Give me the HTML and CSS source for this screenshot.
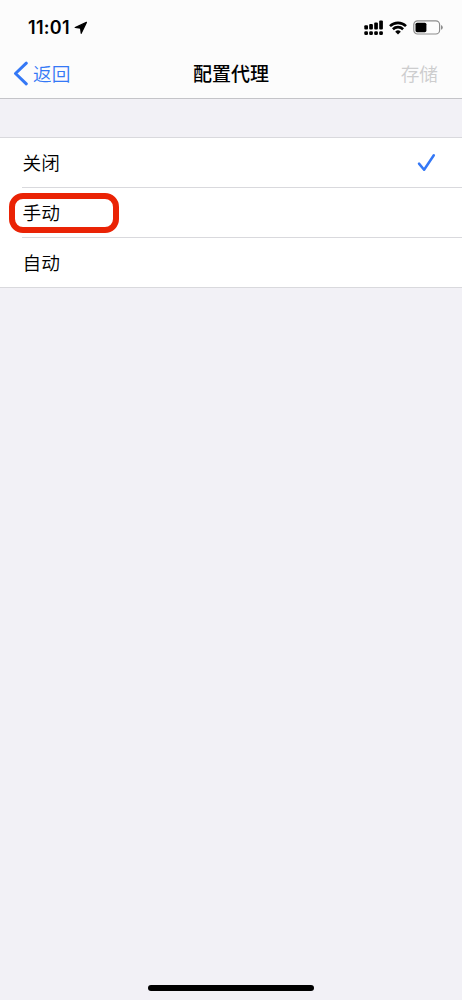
FILE: index.html
```html
<!DOCTYPE html>
<html lang="zh-CN">
<head>
<meta charset="utf-8">
<title>配置代理</title>
<link rel="stylesheet" href="styles.css">
</head>
<body>
<div class="screen">
  <header class="header">
    <div class="status">
      <span class="time">11:01</span>
      <svg class="location" width="14" height="14" viewBox="0 0 14 14"><path d="M12.4 1.4 1.2 6.5 6.6 7.2 7.2 12.3Z" stroke="#000" stroke-width="1.2" stroke-linejoin="round"/></svg>
      <svg class="signal" width="20" height="16" viewBox="0 0 20 16">
        <rect x="0.3" y="5.2" width="3.7" height="4.3" rx="1"/><rect x="5.2" y="4" width="3.7" height="5.5" rx="1"/><rect x="10.2" y="2.4" width="3.7" height="7.1" rx="1"/><rect x="15.2" y="0.6" width="3.7" height="8.9" rx="1"/>
        <rect x="0.3" y="11.3" width="3.7" height="3.8" rx="1.3"/><rect x="5.2" y="11.3" width="3.7" height="3.8" rx="1.3"/><rect x="10.2" y="11.3" width="3.7" height="3.8" rx="1.3"/><rect x="15.2" y="11.3" width="3.7" height="3.8" rx="1.3"/>
      </svg>
      <svg class="wifi" width="18" height="14" viewBox="0 0 18 14"><path d="M1 5.1A11.6 11.6 0 0 1 17 5.1M3.9 8.2A7.4 7.4 0 0 1 14.1 8.2" fill="none" stroke="#000" stroke-width="2.6"/><path d="M6.2 10.7A4 4 0 0 1 11.8 10.7L9 13.5Z"/></svg>
      <svg class="battery" width="30" height="15" viewBox="0 0 30 15"><rect x="0.8" y="0.8" width="25.8" height="13.2" rx="3.8" fill="none" stroke="#8c8c8c" stroke-width="1.2"/><rect x="2.5" y="2.7" width="10.9" height="9.5" rx="1.6"/><path d="M28 5Q29.8 5.6 29.8 7.4T28 9.8Z" fill="#8c8c8c"/></svg>
    </div>
    <nav class="nav">
      <div class="back"><svg width="15" height="25" viewBox="0 0 15 25"><path d="M13.3 2.2 2.5 12.5 13.3 22.8" fill="none" stroke="#3478f6" stroke-width="3" stroke-linecap="round" stroke-linejoin="round"/></svg><span class="label">返回</span></div>
      <h1 class="title label">配置代理</h1>
      <span class="save label">存储</span>
    </nav>
  </header>
  <main class="list">
    <div class="row"><span class="label">关闭</span><svg class="check" width="19" height="19" viewBox="0 0 19 19"><path d="M2 10.6 7.1 16.8 16.8 2.2" fill="none" stroke="#3478f6" stroke-width="2.5" stroke-linecap="round" stroke-linejoin="round"/></svg></div>
    <div class="row highlighted"><span class="label">手动</span></div>
    <div class="row"><span class="label">自动</span></div>
  </main>
  <div class="home"></div>
</div>
</body>
</html>
```
FILE: styles.css
```css
*, *::after { box-sizing: border-box; }
body {
  margin: 0;
  background: #f2f1f6;
  color: #000;
  font-family: "Noto Sans CJK SC", sans-serif;
  font-size: 18.7px;
  font-weight: 350;
  line-height: 28px;
}
.screen {
  display: flex;
  flex-direction: column;
  height: 1000px;
}
.header {
  height: 99px;
  background: #fcfcfc;
  border-bottom: 1px solid #c4c4c8;
}
.status {
  display: flex;
  align-items: center;
  height: 49px;
  padding: 6px 19px 0 28px;
}
.time {
  width: 46px;
  padding-top: 1px;
  font-family: Inter, sans-serif;
  font-size: 18px;
  font-weight: 600;
  letter-spacing: 0.3px;
}
.signal { margin: 0 5px 0 auto; }
.wifi { margin-right: 6px; }
.nav {
  display: grid;
  grid-template-columns: 1fr auto 1fr;
  align-items: center;
  height: 49px;
  padding: 0 24px 0 13px;
}
.label { padding-bottom: 2px; }
.back {
  display: flex;
  align-items: center;
  gap: 5px;
  color: #3478f6;
}
.title {
  margin: 0 0 0 11px;
  font-size: 19px;
  font-weight: 500;
}
.save {
  justify-self: end;
  color: #cdcdce;
}
.list {
  margin-top: 38px;
  background: #fff;
  border-top: 1px solid #d9d9dd;
  border-bottom: 1px solid #d9d9dd;
}
.row {
  position: relative;
  display: flex;
  align-items: center;
  justify-content: space-between;
  height: 50px;
  margin-left: 22px;
  padding: 0 26px 0 0.5px;
  border-bottom: 1px solid #d9d9dd;
}
.row:last-child {
  height: 49px;
  border-bottom: 0;
}
.highlighted::after {
  content: "";
  position: absolute;
  left: -13px;
  top: 5px;
  width: 110px;
  height: 40px;
  border: 6px solid #ea2305;
  border-radius: 14px;
}
.home {
  width: 166px;
  height: 6px;
  margin: auto auto 9px 148px;
  border-radius: 3px;
  background: #000;
}
```
